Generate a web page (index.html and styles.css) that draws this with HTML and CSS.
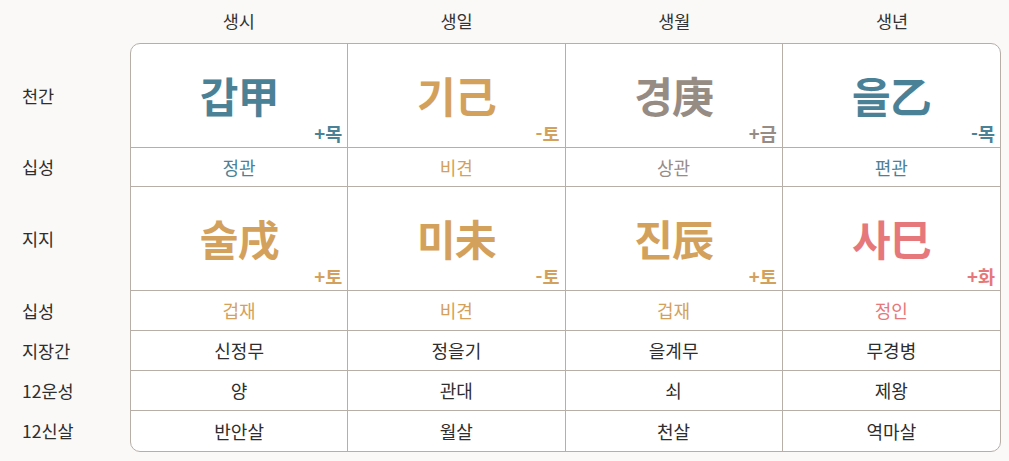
FILE: index.html
```html
<!DOCTYPE html>
<html lang="ko">
<head>
<meta charset="utf-8">
<link rel="stylesheet" href="styles.css">
</head>
<body>
<div class="page">
  <div class="head">
    <div class="corner"></div>
    <div class="hcell">생시</div>
    <div class="hcell">생일</div>
    <div class="hcell">생월</div>
    <div class="hcell">생년</div>
  </div>
  <div class="main">
    <div class="labels">
      <div class="lab big">천간</div>
      <div class="lab mid">십성</div>
      <div class="lab big">지지</div>
      <div class="lab sm">십성</div>
      <div class="lab sm">지장간</div>
      <div class="lab sm">12운성</div>
      <div class="lab last">12신살</div>
    </div>
    <div class="table">
      <div class="cell big"><span class="char blue">갑甲</span><span class="el blue">+목</span></div>
      <div class="cell big"><span class="char gold">기己</span><span class="el gold">-토</span></div>
      <div class="cell big"><span class="char gray">경庚</span><span class="el gray">+금</span></div>
      <div class="cell big"><span class="char blue">을乙</span><span class="el blue">-목</span></div>

      <div class="cell mid blue">정관</div>
      <div class="cell mid gold">비견</div>
      <div class="cell mid gray">상관</div>
      <div class="cell mid blue">편관</div>

      <div class="cell big"><span class="char gold">술戌</span><span class="el gold">+토</span></div>
      <div class="cell big"><span class="char gold">미未</span><span class="el gold">-토</span></div>
      <div class="cell big"><span class="char gold">진辰</span><span class="el gold">+토</span></div>
      <div class="cell big"><span class="char red">사巳</span><span class="el red">+화</span></div>

      <div class="cell sm gold">겁재</div>
      <div class="cell sm gold">비견</div>
      <div class="cell sm gold">겁재</div>
      <div class="cell sm red">정인</div>

      <div class="cell sm">신정무</div>
      <div class="cell sm">정을기</div>
      <div class="cell sm">을계무</div>
      <div class="cell sm">무경병</div>

      <div class="cell sm">양</div>
      <div class="cell sm">관대</div>
      <div class="cell sm">쇠</div>
      <div class="cell sm">제왕</div>

      <div class="cell last">반안살</div>
      <div class="cell last">월살</div>
      <div class="cell last">천살</div>
      <div class="cell last">역마살</div>
    </div>
  </div>
</div>
</body>
</html>
```

FILE: styles.css
```css
* { box-sizing: border-box; }
html, body {
  margin: 0;
  padding: 0;
  background: #faf9f7;
}
body {
  font-family: "Noto Sans CJK KR", "Noto Sans", sans-serif;
  color: #333333;
}
.page {
  width: 1009px;
  padding-right: 8px;
}
.head {
  display: grid;
  grid-template-columns: 130px repeat(4, 1fr);
  height: 43px;
  align-items: center;
}
.hcell {
  text-align: center;
  font-size: 17.5px;
  font-weight: 400;
  color: #333333;
  line-height: 1;
  padding-bottom: 2px;
}
.main {
  display: flex;
}
.labels {
  width: 130px;
  display: flex;
  flex-direction: column;
}
.lab {
  display: flex;
  align-items: center;
  padding-left: 22px;
  font-size: 17.5px;
  font-weight: 400;
  color: #2e2e2e;
}
.lab.big { height: 104px; }
.lab.mid { height: 39px; }
.lab.sm { height: 40px; }
.lab.last { height: 41px; }

.table {
  flex: 1;
  border: 1px solid #b6aea7;
  border-radius: 10px;
  overflow: hidden;
  background: #ffffff;
  display: grid;
  grid-template-columns: repeat(4, 1fr);
  grid-template-rows: 104px 39px 104px 40px 40px 40px 40px;
}
.cell {
  position: relative;
  display: flex;
  align-items: center;
  justify-content: center;
  border-right: 1px solid #b6aea7;
  border-bottom: 1px solid #b6aea7;
  font-size: 18px;
  color: #2e2e2e;
}
.cell:nth-child(4n) { border-right: none; }
.cell.last { border-bottom: none; }
.cell.mid, .cell.sm, .cell.last { padding-bottom: 1px; }

.char {
  font-size: 42px;
  font-weight: 700;
  line-height: 1;
  letter-spacing: -1px;
  margin-top: -2px;
}
.el {
  position: absolute;
  right: 5px;
  bottom: 3px;
  font-size: 18.5px;
  font-weight: 700;
  line-height: 1.2;
}
.blue { color: #4b8196; }
.gold { color: #d4a15c; }
.gray { color: #978c84; }
.red { color: #e6787b; }
```
